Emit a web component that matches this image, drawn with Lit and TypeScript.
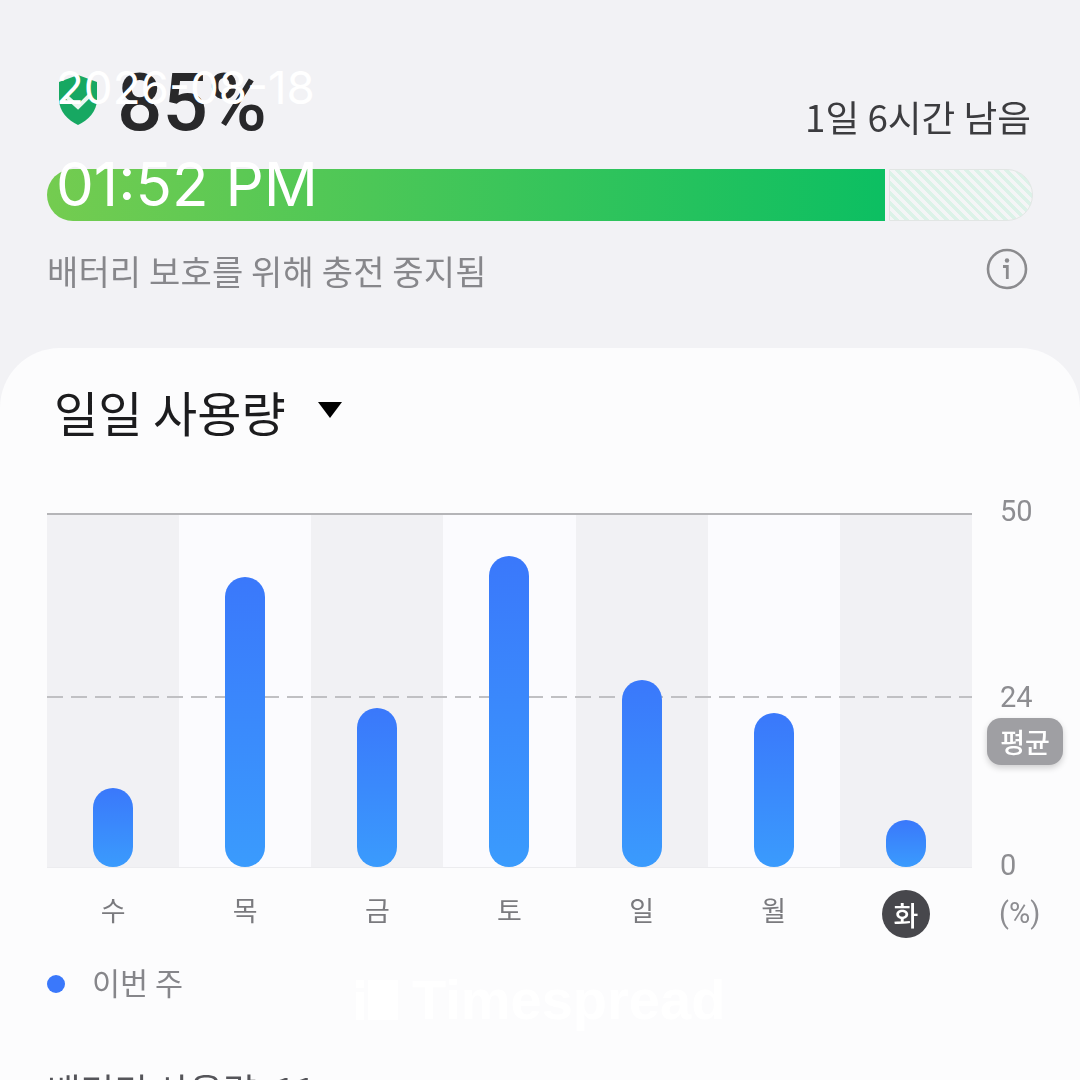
import { LitElement, html, css } from "lit";
import { customElement } from "lit/decorators.js";

const DAYS = [
  { d: "수", h: 79 },
  { d: "목", h: 290 },
  { d: "금", h: 159 },
  { d: "토", h: 311 },
  { d: "일", h: 187 },
  { d: "월", h: 154 },
  { d: "화", h: 47, today: true },
];

@customElement("app-root")
export class AppRoot extends LitElement {
  static styles = css`
    :host { display: block; width: 1080px; height: 1080px; overflow: hidden; position: relative; background: #f2f2f5;
      font-family: "Noto Sans CJK KR", Roboto, sans-serif; }
    .screen { display: flex; flex-direction: column; height: 1080px; filter: blur(0.5px); }
    .head { padding: 58px 47px 0 47px; height: 290px; flex: none; display: flex; flex-direction: column; }
    .top { display: flex; align-items: flex-end; justify-content: space-between; height: 82px; flex: none; }
    .pct { display: flex; align-items: flex-end; gap: 19px; padding-left: 11px; }
    .pct svg { display: block; margin-bottom: 14px; }
    .num { font: 500 80px/82px Roboto, sans-serif; color: #28282a; height: 82px; margin-bottom: -4px; }
    .left { font-size: 36.7px; line-height: 48px; color: #3c3c3f; padding-right: 2px; }
    .track { margin-top: 29px; height: 52px; display: flex; gap: 4px; width: 986px; flex: none; }
    .fill { width: 838px; border-radius: 26px 0 0 26px; background: linear-gradient(90deg, #74cc50, #0cbf62); }
    .hatch { flex: 1; border-radius: 0 26px 26px 0; border: 1px solid #e2e6e4; box-sizing: border-box;
      background: repeating-linear-gradient(45deg, #f4f5f6 0 3.5px, #dcf2e8 3.5px 7px); }
    .note { margin-top: 24px; display: flex; align-items: center; justify-content: space-between; height: 50px; flex: none; color: #87878b; font-size: 34px; padding-right: 5px; letter-spacing: 0.15px; }
    .info { display: block; margin-top: -2px; }
    .card { flex: 1; background: #fcfcfd; border-radius: 60px 60px 0 0; padding: 31px 0 0 47px; }
    .title { display: flex; align-items: center; gap: 32px; height: 64px; font-size: 48px; color: #1c1c1e; padding-left: 7px; }
    .tri { width: 0; height: 0; border-left: 12.5px solid transparent; border-right: 12.5px solid transparent; border-top: 16px solid #000; margin-top: -2px; }
    .chart { display: flex; margin-top: 70px; }
    .plot { position: relative; width: 925px; height: 352px; border-top: 2px solid #b5b5b8; border-bottom: 1px solid #ececef; display: grid; grid-template-columns: repeat(7, 1fr); }
    .col { display: flex; align-items: flex-end; justify-content: center; background: #fbfbfe; }
    .col.alt { background: #f1f1f4; }
    .bar { width: 40px; border-radius: 20px; background: linear-gradient(180deg, #3a78fb, #3a9bfd); position: relative; z-index: 2; }
    .avg { position: absolute; left: 0; right: 0; top: 181px; height: 2px; z-index: 1;
      background: repeating-linear-gradient(90deg, #c0c0c3 0 16px, transparent 16px 24px); }
    .axis { position: relative; width: 108px; color: #8d8d91; font: 400 29px/34px Roboto, sans-serif; }
    .tick { position: absolute; left: 28px; }
    .badge { position: absolute; left: 15px; top: 205px; width: 76px; height: 47px; border-radius: 14px; background: #9f9fa3; color: #fff; font: 500 27px/47px "Noto Sans CJK KR", sans-serif; text-align: center; box-shadow: 0 3px 6px rgba(0,0,0,.18); }
    .labels { display: grid; grid-template-columns: repeat(7, 1fr); width: 925px; margin-top: 22px; height: 48px; align-items: center; justify-items: center; font-size: 27px; color: #7a7a7e; position: relative; }
    .day { margin-top: -9px; }
    .today { width: 48px; height: 48px; border-radius: 50%; background: #47474c; color: #fff; display: flex; align-items: center; justify-content: center; font-weight: 500; }
    .unit { position: absolute; left: 952px; top: 6px; font: 400 29px/34px Roboto, sans-serif; color: #8d8d91; }
    .legend { display: flex; align-items: center; gap: 27px; margin-top: 24px; height: 44px; font-size: 30.5px; color: #86868a; }
    .legend .txt { margin-top: -5px; }
    .dot { width: 18px; height: 18px; border-radius: 50%; background: #3a78fb; }
    .sub { margin-top: 60px; font-size: 36.5px; line-height: 48px; color: #55555a; white-space: nowrap; }
    .overlay { position: absolute; left: 56px; color: #fff; font-family: Inter, Roboto, sans-serif; font-weight: 400; white-space: nowrap; }
    .date { top: 59px; font-size: 45.7px; line-height: 58px; }
    .time { top: 148px; font-size: 60px; line-height: 72px; }
    .mark { position: absolute; left: 356px; top: 970px; display: flex; align-items: center; gap: 14px; color: #fff; font: 700 56px/60px "Liberation Sans", sans-serif; }
  `;

  render() {
    return html`
      <div class="screen">
        <div class="head">
          <div class="top">
            <div class="pct">
              <svg width="40" height="52" viewBox="0 0 40 52"><path d="M20 1 L39 8 V25 C39 38 30 46 20 51 C10 46 1 38 1 25 V8 Z" fill="#17a862"/><path d="M9 23 L20 33 L32 21" fill="none" stroke="#e9f7ef" stroke-width="4"/></svg>
              <div class="num">85%</div>
            </div>
            <div class="left">1일 6시간 남음</div>
          </div>
          <div class="track"><div class="fill"></div><div class="hatch"></div></div>
          <div class="note">
            <span>배터리 보호를 위해 충전 중지됨</span>
            <svg class="info" width="42" height="42" viewBox="0 0 42 42"><circle cx="21" cy="21" r="19" fill="none" stroke="#8b8b8e" stroke-width="2.6"/><circle cx="21" cy="12.5" r="2.2" fill="#8b8b8e"/><path d="M17 18.5 H21.3 V31" fill="none" stroke="#8b8b8e" stroke-width="2.8"/></svg>
          </div>
        </div>
        <div class="card">
          <div class="title"><span>일일 사용량</span><span class="tri"></span></div>
          <div class="chart">
            <div class="plot">
              <div class="avg"></div>
              ${DAYS.map((x, i) => html`<div class="col ${i % 2 === 0 ? "alt" : ""}"><div class="bar" style="height:${x.h}px"></div></div>`)}
            </div>
            <div class="axis">
              <span class="tick" style="top:-19px">50</span>
              <span class="tick" style="top:167px">24</span>
              <span class="tick" style="top:335px">0</span>
              <span class="badge">평균</span>
            </div>
          </div>
          <div class="labels">
            ${DAYS.map((x) => html`<div class="${x.today ? "today" : "day"}">${x.d}</div>`)}
            <span class="unit">(%)</span>
          </div>
          <div class="legend"><span class="dot"></span><span class="txt">이번 주</span></div>
          <div class="sub">배터리 사용량: 11</div>
        </div>
      </div>
      <div class="overlay date">2026-08-18</div>
      <div class="overlay time">01:52 PM</div>
      <div class="mark">
        <svg width="42" height="40" viewBox="0 0 42 40"><path d="M0 12h8v28H0zM0 0h8v8H0zM12 0h30v40H12z" fill="#fff"/></svg>
        <span>Timespread</span>
      </div>
    `;
  }
}
